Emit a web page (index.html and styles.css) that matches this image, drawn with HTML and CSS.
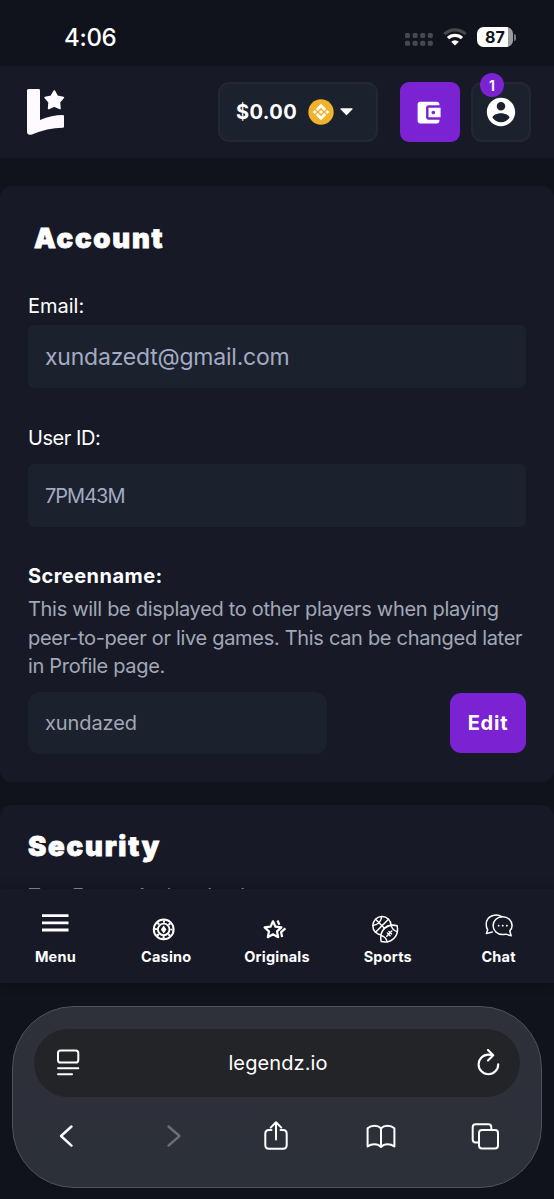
FILE: index.html
```html
<!DOCTYPE html>
<html lang="en">
<head>
    <meta charset="UTF-8">
    <meta name="viewport" content="width=device-width, initial-scale=1.0">
    <title>Account</title>
    <link rel="stylesheet" href="styles.css">
</head>
<body>
    <div class="status-bar">
        <span class="clock">4:06</span>
        <div class="status-icons">
            <svg class="signal" width="28" height="14" viewBox="0 0 28 14" fill="#46484e">
                <rect x="0" y="0" width="5" height="5" rx="1.5"/><rect x="7.6" y="0" width="5" height="5" rx="1.5"/><rect x="15.2" y="0" width="5" height="5" rx="1.5"/><rect x="22.8" y="0" width="5" height="5" rx="1.5"/>
                <rect x="0" y="7.7" width="5" height="5" rx="1.5"/><rect x="7.6" y="7.7" width="5" height="5" rx="1.5"/><rect x="15.2" y="7.7" width="5" height="5" rx="1.5"/><rect x="22.8" y="7.7" width="5" height="5" rx="1.5"/>
            </svg>
            <svg class="wifi" width="24" height="18" viewBox="0 0 24 18" fill="none" stroke-width="3.2">
                <path d="M1.3 6.2a15.4 15.4 0 0 1 21.4 0" stroke="#46484e"/>
                <path d="M5 10.2a10.1 10.1 0 0 1 14 0" stroke="#fff"/>
                <path d="M12 17.6L8.2 13.7a5.5 5.5 0 0 1 7.6 0z" fill="#fff"/>
            </svg>
            <div class="battery"><span>87</span></div>
            <i class="battery-tip"></i>
        </div>
    </div>

    <header class="header">
        <svg class="logo" width="38" height="47" viewBox="0 0 38 47" fill="#fffaff">
            <path d="M1.5 0H11.6Q13 0 13 1.4V31Q25 26 35.8 26Q37 26 37 27.3V37.5Q37 38.7 35.8 38.7Q20 39 5 45.5Q0 47 0 42V1.5Q0 0 1.5 0z"/>
            <path d="M27.3 2L30.4 7.3L36.4 8.6L32.4 13.3L33 19.5L27.2 17.1L21.6 19.5L22.1 13.3L18.1 8.6L24.1 7.3z" stroke="#fffaff" stroke-width="1.6" stroke-linejoin="round"/>
        </svg>
        <div class="header-actions">
            <button class="balance">
                <span class="amount">$0.00</span>
                <svg width="26" height="26" viewBox="0 0 26 26">
                    <circle cx="13" cy="13" r="12.7" fill="#f0b32f"/>
                    <g fill="#fff">
                        <path d="M13 4.8l5.2 5.1-2 2-3.2-3.1-3.2 3.1-2-2z"/>
                        <path d="M13 21.2l5.2-5.1-2-2-3.2 3.1-3.2-3.1-2 2z"/>
                        <path d="M13 11l2 2-2 2-2-2zM6.7 11l2 2-2 2-2-2zM19.3 11l2 2-2 2-2-2z"/>
                    </g>
                </svg>
                <svg class="caret" width="13" height="8" viewBox="0 0 13 8" fill="#fff"><path d="M.8.3h11.4q.8.3.2 1L7.2 6.8q-.7.7-1.4 0L.6 1.3Q0 .6.8.3z"/></svg>
            </button>
            <button class="icon-btn wallet">
                <svg width="29" height="29" viewBox="0 0 24 24" fill="#fff"><path d="M21 18v1c0 1.1-.9 2-2 2H5c-1.11 0-2-.9-2-2V5c0-1.1.89-2 2-2h14c1.1 0 2 .9 2 2v1h-9c-1.11 0-2 .9-2 2v8c0 1.1.89 2 2 2h9zm-9-2h10V8H12v8zm4-2.5c-.83 0-1.5-.67-1.5-1.5s.67-1.5 1.5-1.5 1.5.67 1.5 1.5-.67 1.5-1.5 1.5z"/></svg>
            </button>
            <button class="icon-btn user">
                <svg width="34" height="34" viewBox="0 0 24 24" fill="#fff"><path d="M12 2C6.48 2 2 6.48 2 12s4.48 10 10 10 10-4.48 10-10S17.52 2 12 2zm0 3c1.66 0 3 1.34 3 3s-1.34 3-3 3-3-1.34-3-3 1.34-3 3-3zm0 14.2c-2.5 0-4.71-1.28-6-3.22.03-1.99 4-3.08 6-3.08 1.99 0 5.97 1.09 6 3.08-1.29 1.94-3.5 3.22-6 3.22z"/></svg>
                <span class="badge">1</span>
            </button>
        </div>
    </header>

    <main class="content">
        <section class="card account">
            <h2 class="card-title">Account</h2>
            <div class="label">Email:</div>
            <div class="field email">xundazedt@gmail.com</div>
            <div class="label user-label">User ID:</div>
            <div class="field user-id">7PM43M</div>
            <div class="label screen-label">Screenname:</div>
            <p class="hint">This will be displayed to other players when playing<br>peer-to-peer or live games. This can be changed later<br>in Profile page.</p>
            <div class="edit-row">
                <div class="field screenname">xundazed</div>
                <button class="edit-btn">Edit</button>
            </div>
        </section>
        <section class="card security">
            <h2 class="card-title">Security</h2>
            <p class="security-text">Two Factor Authentication</p>
        </section>
    </main>

    <nav class="nav">
        <a class="nav-item">
            <svg width="40" height="40" viewBox="0 0 40 40" stroke="#fff" stroke-width="2.8"><path d="M7 10.7h26.5M7 17.8h26.5M7 25h26.5"/></svg>
            <span>Menu</span>
        </a>
        <a class="nav-item">
            <svg width="40" height="40" viewBox="0 0 40 40" fill="none" stroke="#fff">
                <circle cx="17.7" cy="24.4" r="9.9" stroke-width="2"/>
                <circle cx="17.7" cy="24.4" r="7.8" stroke-width="2.3" stroke-dasharray="2.1 4.026" stroke-dashoffset="1"/>
                <circle cx="17.7" cy="24.4" r="5.8" stroke-width="1.9"/>
                <path d="M17.7 20.4l2.8 4-2.8 4-2.8-4z" fill="#fff" stroke="none"/>
            </svg>
            <span>Casino</span>
        </a>
        <a class="nav-item">
            <svg width="40" height="40" viewBox="0 0 40 40" fill="none" stroke="#fff" stroke-width="2.2" stroke-linejoin="round">
                <path d="M16 16.3l2.5 5.4 5.9.7-4.4 4 1.2 5.8-5.2-2.9-5.2 2.9 1.2-5.8-4.4-4 5.9-.7z"/>
                <path d="M20.5 15.5l1.9 4.2M28.4 23.4l-4.3 3.7 1 4.9"/>
            </svg>
            <span>Originals</span>
        </a>
        <a class="nav-item">
            <svg width="40" height="40" viewBox="0 0 40 40" fill="none" stroke="#fff" stroke-width="1.5" stroke-linecap="round">
                <circle cx="14" cy="20.7" r="9.2"/>
                <path d="M7.5 27.2l13-13M7.5 14.2l11 11M5 20.5q7.5-1 8.800-9M14 29.500q.5-8 9-9.300"/>
                <path d="M13.2 36.6q-1.8-8.6 3.6-13.4 5-4.4 12.3-2.5 1.7 7.3-2.8 12.4-4.8 5.3-13.1 3.5z" fill="#171a26"/>
                <path d="M13.1 30.5q4.9 1.2 6.1 6.4M23.2 20.4q1.2 5 6.1 6.2M18.8 31.200l5-5.200M19.400 28l2.700 2.700M20.900 26.400l2.700 2.700" stroke-width="1.4"/>
            </svg>
            <span>Sports</span>
        </a>
        <a class="nav-item">
            <svg width="40" height="40" viewBox="0 0 40 40" fill="none" stroke="#fff" stroke-width="1.5" stroke-linejoin="round" stroke-linecap="round">
                <path d="M22.7 11.6C18 8.2 7.2 10.1 7.2 19.2q0 3.5 1.5 5.6l-1.3 3.8 5.9-1.6"/>
                <path d="M23.6 11.7c-5.3 0-9.5 4-9.5 8.9s4.2 9 9.5 9q1.6 0 3.2-.5l5.3 1.7-1.3-5q2.3-2.2 2.3-5.2c0-4.9-4.2-8.9-9.5-8.9z"/>
                <path d="M19.6 20.7h.1M23.7 20.7h.1M27.8 20.7h.1" stroke-width="1.8"/>
            </svg>
            <span>Chat</span>
        </a>
    </nav>

    <footer class="browser">
        <div class="toolbar">
            <div class="address">
                <svg width="24" height="28" viewBox="0 0 24 28" fill="none" stroke="#fff" stroke-width="2" stroke-linecap="round"><rect x="2" y="1.5" width="20.3" height="12" rx="2.6"/><path d="M2 19.3h20.3M2 25.2h14"/></svg>
                <span class="url">legendz.io</span>
                <svg width="24" height="28" viewBox="0 0 24 28" fill="none" stroke="#fff" stroke-width="2.1" stroke-linecap="round" stroke-linejoin="round"><path d="M22.2 15.4A9.8 9.8 0 1 1 12.4 5.6q2.6 0 4.3.8M12 1l5.2 5.3-5.2 5.3"/></svg>
            </div>
            <div class="tools">
                <svg width="30" height="32" viewBox="0 0 30 32" fill="none" stroke="#fff" stroke-width="2.4" stroke-linecap="round" stroke-linejoin="round"><path d="M20.5 6.5L10 16l10.500 9.600"/></svg>
                <svg width="30" height="32" viewBox="0 0 30 32" fill="none" stroke="#6b6e76" stroke-width="2.4" stroke-linecap="round" stroke-linejoin="round"><path d="M12.5 6.5L23.500 16l-11 9.600"/></svg>
                <svg width="30" height="32" viewBox="0 0 30 32" fill="none" stroke="#fff" stroke-width="2" stroke-linecap="round" stroke-linejoin="round"><path d="M10.5 10H8q-3.7 0-3.7 3.7V25q0 3.7 3.7 3.7h14q3.7 0 3.7-3.7V13.7Q25.7 10 22 10h-2.5M15 19.5V2.5M9.7 7.6L15 2.3l5.3 5.3"/></svg>
                <svg width="30" height="32" viewBox="0 0 30 32" fill="none" stroke="#fff" stroke-width="2" stroke-linecap="round" stroke-linejoin="round"><path d="M15 8.2Q12.5 5.8 8.5 5.8 4.5 5.8 1.6 8.2V26.5Q4.500 24.3 8.5 24.3 12.5 24.3 15 27 17.5 24.3 21.5 24.3 25.5 24.3 28.4 26.5V8.2Q25.5 5.8 21.5 5.8 17.5 5.8 15 8.2V27"/></svg>
                <svg width="30" height="32" viewBox="0 0 30 32" fill="none" stroke="#fff" stroke-width="2" stroke-linejoin="round"><rect x="8" y="10" width="19" height="18.5" rx="3"/><path d="M8 22.5H4.7Q1.7 22.5 1.7 19.5V7.2Q1.7 4.2 4.7 4.2H17.3Q20.3 4.2 20.3 7.2V10"/></svg>
            </div>
        </div>
    </footer>
</body>
</html>
```
FILE: styles.css
```css
* {
    box-sizing: border-box;
}

body {
    margin: 0;
    height: 1199px;
    display: flex;
    flex-direction: column;
    overflow: hidden;
    background-color: #10131b;
    color: #fff;
    font-family: Inter, sans-serif;
}

svg {
    display: block;
    flex: none;
}

button {
    font-family: inherit;
    color: inherit;
    border: none;
    padding: 0;
}

/* status bar */
.status-bar {
    flex: none;
    height: 66px;
    padding: 8px 38px 0 64px;
    display: flex;
    align-items: center;
    justify-content: space-between;
}

.clock {
    font-size: 24px;
    font-weight: 550;
    letter-spacing: -0.3px;
}

.status-icons {
    display: flex;
    align-items: center;
}

.signal {
    margin: 5px 10px 0 0;
}

.wifi {
    margin-right: 10px;
}

.battery {
    width: 36px;
    height: 20px;
    border-radius: 6.5px;
    background: linear-gradient(to right, #fff 31px, #9b9ca0 31px);
    color: #10131b;
    font-size: 16px;
    font-weight: 700;
    line-height: 20px;
    padding-left: 8px;
}

.battery-tip {
    width: 2px;
    height: 7px;
    margin-left: 1px;
    border-radius: 0 2px 2px 0;
    background-color: #77797e;
}

/* header */
.header {
    flex: none;
    height: 92px;
    padding: 0 23px 0 27px;
    display: flex;
    align-items: center;
    justify-content: space-between;
    background-color: #171a26;
}

.header-actions {
    display: flex;
}

.balance {
    width: 160px;
    height: 60px;
    padding-left: 16px;
    display: flex;
    align-items: center;
    background-color: #1c212e;
    border: 2px solid #222735;
    border-radius: 11px;
}

.amount {
    width: 72px;
    text-align: left;
    font-size: 20px;
    font-weight: 700;
    letter-spacing: 0.4px;
}

.caret {
    margin-left: 6px;
}

.icon-btn {
    position: relative;
    width: 60px;
    height: 60px;
    display: flex;
    align-items: center;
    justify-content: center;
    border-radius: 9px;
}

.wallet {
    margin: 0 11px 0 22px;
    padding-right: 4px;
    background-color: #7b22d3;
}

.user {
    background-color: #1c212e;
    border: 2px solid #222735;
    border-radius: 11px;
}

.badge {
    position: absolute;
    left: 7px;
    top: -11px;
    width: 24px;
    height: 24px;
    border-radius: 50%;
    background-color: #7b22d3;
    font-size: 14px;
    font-weight: 600;
    line-height: 25px;
    text-align: center;
}

/* cards */
.content {
    flex: none;
    height: 731px;
    padding-top: 28px;
    overflow: hidden;
}

.card {
    background-color: #171a26;
    border-radius: 12px;
    padding: 0 28px;
}

.account {
    height: 596px;
    padding-top: 33px;
}

.card-title {
    margin: 0;
    font-size: 27.5px;
    font-weight: 900;
    line-height: 39px;
    letter-spacing: 1.8px;
    -webkit-text-stroke: 0.8px #fff;
}

.account .card-title {
    padding-left: 6px;
    margin-bottom: 34px;
}

.label {
    font-size: 20px;
    line-height: 28px;
    margin-bottom: 5px;
}

.user-label {
    margin: 36px 0 12px;
    letter-spacing: -0.45px;
}

.screen-label {
    margin: 35px 0 5px;
    font-weight: 700;
    letter-spacing: 0.45px;
}

.field {
    height: 63px;
    padding-left: 17px;
    display: flex;
    align-items: center;
    border-radius: 6px;
    background-color: #1c212e;
    color: #a3abc2;
    font-size: 20px;
}

.email {
    font-size: 23px;
    letter-spacing: -0.22px;
}

.user-id {
    letter-spacing: -1px;
}

.hint {
    margin: 0;
    color: #a2a8b7;
    font-size: 20px;
    line-height: 28.5px;
    letter-spacing: -0.31px;
    white-space: nowrap;
}

.edit-row {
    margin-top: 11px;
    display: flex;
    align-items: center;
    justify-content: space-between;
}

.screenname {
    width: 299px;
    height: 62px;
    border-radius: 12px;
    color: #a2a8b7;
    letter-spacing: -0.1px;
}

.edit-btn {
    width: 76px;
    height: 60px;
    border-radius: 11px;
    background-color: #7b22d3;
    font-size: 20px;
    font-weight: 700;
    letter-spacing: 0.8px;
}

.security {
    height: 200px;
    margin-top: 23px;
    padding-top: 22px;
}

.security-text {
    margin: 16px 0 0;
    color: #a2a8b7;
    font-size: 20px;
    line-height: 28px;
    letter-spacing: -0.31px;
}

/* bottom nav */
.nav {
    flex: none;
    height: 94px;
    padding-top: 16px;
    display: grid;
    grid-template-columns: repeat(5, 1fr);
    background-color: #171a26;
    box-shadow: 0 0 8px rgba(10, 12, 20, 0.6);
    z-index: 1;
}

.nav-item {
    display: flex;
    flex-direction: column;
    align-items: center;
    font-size: 14.5px;
    font-weight: 700;
    line-height: 24px;
    letter-spacing: 0.2px;
}

/* browser toolbar */
.browser {
    flex: 1;
    padding: 23px 12px 11px;
}

.toolbar {
    height: 182px;
    padding: 22px 21px 0;
    border: 1px solid #4f525e;
    border-radius: 62px;
    background: linear-gradient(#2e303a, #2c3039);
}

.address {
    height: 68px;
    padding: 0 20px 0 22px;
    display: flex;
    align-items: center;
    justify-content: space-between;
    border-radius: 34px;
    background-color: #232428;
}

.url {
    font-size: 20px;
    letter-spacing: 0.1px;
}

.tools {
    padding: 23px 19px 0 17px;
    display: flex;
    justify-content: space-between;
}
```
